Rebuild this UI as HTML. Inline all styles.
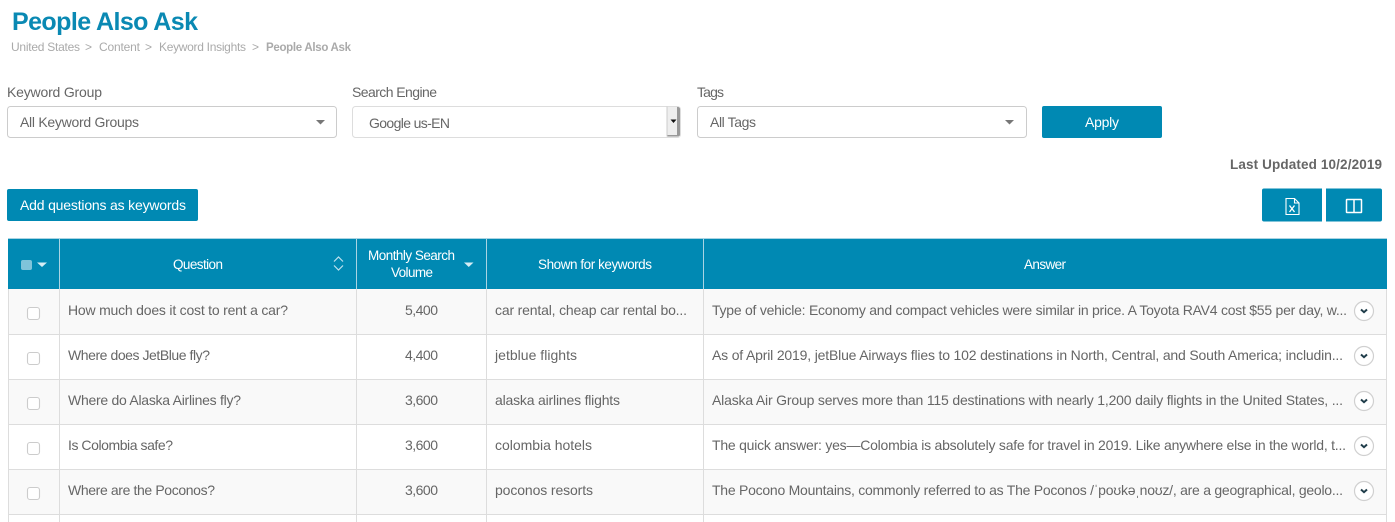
<!DOCTYPE html>
<html><head><meta charset="utf-8"><title>People Also Ask</title>
<style>
html,body{margin:0;padding:0;background:#fff;width:1395px;height:522px;overflow:hidden}
svg{display:block}
text{font-family:"Liberation Sans",sans-serif;font-size:14px;fill:#666}
.w{fill:#fff;font-size:13.500px}
.b{font-size:12px;fill:#aaa}
.l{stroke:#ddd;stroke-width:1;fill:none}
</style></head><body>
<svg width="1395" height="522" viewBox="0 0 1395 522" xmlns="http://www.w3.org/2000/svg">
<text x="12" y="30" textLength="186" lengthAdjust="spacing" style="font-size:25px;font-weight:bold;fill:#0a89b3">People Also Ask</text>
<text class="b" x="11" y="51" textLength="69">United States</text>
<text class="b" x="85" y="51" textLength="6">&gt;</text>
<text class="b" x="99" y="51" textLength="41">Content</text>
<text class="b" x="145" y="51" textLength="6">&gt;</text>
<text class="b" x="159" y="51" textLength="87">Keyword Insights</text>
<text class="b" x="252" y="51" textLength="6">&gt;</text>
<text class="b" x="266" y="51" textLength="85" style="font-weight:bold;font-size:11.500px">People Also Ask</text>

<text x="7" y="97" textLength="95">Keyword Group</text>
<text x="352" y="97" textLength="85">Search Engine</text>
<text x="697" y="97" textLength="27">Tags</text>

<rect x="7.500" y="106.500" width="329" height="31" rx="3" fill="#fff" stroke="#ccc"/>
<text x="20" y="127" textLength="119">All Keyword Groups</text>
<path d="M316 120h9l-4.500 4.500z" fill="#777"/>

<rect x="352.500" y="106.500" width="328" height="31" rx="3" fill="#fff" stroke="#ddd"/>
<text x="369" y="128" textLength="81">Google us-EN</text>
<rect x="667" y="107" width="13" height="30" fill="#eee"/>
<path d="M667 136.500h11q2 0 2-2V109q0-2-2-2h-1v28h-10z" fill="#999"/>
<path d="M667 106.500v30" stroke="#ccc"/>
<path d="M670.500 119.500h6l-3 3.500z" fill="#111"/>

<rect x="697.500" y="106.500" width="329" height="31" rx="3" fill="#fff" stroke="#ccc"/>
<text x="710" y="127" textLength="46">All Tags</text>
<path d="M1005 120h9l-4.500 4.500z" fill="#777"/>

<rect x="1042" y="106" width="120" height="32" rx="2" fill="#0089b3"/>
<text class="w" x="1085" y="127" textLength="34" style="font-size:14px">Apply</text>

<text x="1230" y="169" textLength="152" style="font-weight:bold;font-size:13.500px">Last Updated 10/2/2019</text>

<rect x="7" y="189" width="191" height="32" rx="2" fill="#0089b3"/>
<text class="w" x="20" y="210" textLength="166" style="font-size:14px">Add questions as keywords</text>

<path d="M1264 188.500h58v33h-58q-2 0-2-2v-29q0-2 2-2z" fill="#0089b3"/>
<path d="M1326 188.500h54q2 0 2 2v29q0 2-2 2h-54z" fill="#0089b3"/>
<path d="M1286 198.500h8.500l4.500 4.500v11.500h-13zM1294.500 198.500v4.500h4.500" fill="none" stroke="#fff" stroke-width="1.100"/>
<path d="M1289.500 205.500l5 6.500M1294.500 205.500l-5 6.500" stroke="#fff" stroke-width="1.300" fill="none"/>
<rect x="1346.500" y="199.500" width="15" height="13" rx="0.500" fill="none" stroke="#fff" stroke-width="1.500"/>
<path d="M1354 199.500v13" stroke="#fff" stroke-width="1.500"/>

<!-- table -->
<rect x="8" y="238" width="1379" height="51" fill="#0089b3"/>
<path d="M59.500 238v51M356.500 238v51M486.500 238v51M703.500 238v51" stroke="#a9d4e3"/>
<rect x="8" y="238" width="1379" height="1" fill="#a9d4e3"/>
<rect x="21" y="260" width="11" height="10" rx="2" fill="#7fc4da"/>
<path d="M37 262.500h10l-5 4.500z" fill="#d5edf5"/>
<text class="w" x="173" y="269" textLength="50">Question</text>
<path d="M334 261.500l4.500-4.500 4.500 4.500M334 265.500l4.500 4.500 4.500-4.500" fill="none" stroke="#bfe2ee" stroke-width="1.200"/>
<text class="w" x="368" y="260" textLength="87">Monthly Search</text>
<text class="w" x="391" y="277" textLength="42">Volume</text>
<path d="M464 262.500h9.500l-4.750 4.500z" fill="#d5edf5"/>
<text class="w" x="538" y="269" textLength="114">Shown for keywords</text>
<text class="w" x="1024" y="269" textLength="42">Answer</text>

<rect x="8" y="289" width="1379" height="45" fill="#f9f9f9"/>
<rect x="8" y="379" width="1379" height="45" fill="#f9f9f9"/>
<rect x="8" y="469" width="1379" height="45" fill="#f9f9f9"/>
<path class="l" d="M8 334.500h1379M8 379.500h1379M8 424.500h1379M8 469.500h1379M8 514.500h1379"/>
<path class="l" d="M8.500 289v233M59.500 289v233M356.500 289v233M486.500 289v233M703.500 289v233M1386.500 289v233"/>

<g fill="#fff" stroke="#ccc" stroke-width="1.100">
<rect x="27.500" y="307.500" width="12" height="12" rx="2.500"/>
<rect x="27.500" y="352.500" width="12" height="12" rx="2.500"/>
<rect x="27.500" y="397.500" width="12" height="12" rx="2.500"/>
<rect x="27.500" y="442.500" width="12" height="12" rx="2.500"/>
<rect x="27.500" y="487.500" width="12" height="12" rx="2.500"/>
</g>

<text x="68" y="315" textLength="220">How much does it cost to rent a car?</text>
<text x="405" y="315" textLength="33">5,400</text>
<text x="495" y="315" textLength="192">car rental, cheap car rental bo...</text>
<text x="712" y="315" textLength="635">Type of vehicle: Economy and compact vehicles were similar in price. A Toyota RAV4 cost $55 per day, w...</text>

<text x="68" y="360" textLength="142">Where does JetBlue fly?</text>
<text x="405" y="360" textLength="33">4,400</text>
<text x="495" y="360" textLength="82">jetblue flights</text>
<text x="712" y="360" textLength="631">As of April 2019, jetBlue Airways flies to 102 destinations in North, Central, and South America; includin...</text>

<text x="68" y="405" textLength="173">Where do Alaska Airlines fly?</text>
<text x="405" y="405" textLength="33">3,600</text>
<text x="495" y="405" textLength="125">alaska airlines flights</text>
<text x="712" y="405" textLength="631">Alaska Air Group serves more than 115 destinations with nearly 1,200 daily flights in the United States, ...</text>

<text x="68" y="450" textLength="105">Is Colombia safe?</text>
<text x="405" y="450" textLength="33">3,600</text>
<text x="495" y="450" textLength="97">colombia hotels</text>
<text x="712" y="450" textLength="634">The quick answer: yes—Colombia is absolutely safe for travel in 2019. Like anywhere else in the world, t...</text>

<text x="68" y="495" textLength="147">Where are the Poconos?</text>
<text x="405" y="495" textLength="33">3,600</text>
<text x="495" y="495" textLength="98">poconos resorts</text>
<text x="712" y="495" textLength="631" style="font-family:'Liberation Sans','DejaVu Sans',sans-serif">The Pocono Mountains, commonly referred to as The Poconos /ˈpoʊkəˌnoʊz/, are a geographical, geolo...</text>

<g fill="#fff" stroke="#d0d0d0" stroke-width="1.200">
<circle cx="1364" cy="311" r="9.500"/>
<circle cx="1364" cy="356" r="9.500"/>
<circle cx="1364" cy="401" r="9.500"/>
<circle cx="1364" cy="446" r="9.500"/>
<circle cx="1364" cy="491" r="9.500"/>
</g>
<g fill="none" stroke="#1f3d4a" stroke-width="2">
<path d="M1361 309.500l3 2.700 3-2.700"/>
<path d="M1361 354.500l3 2.700 3-2.700"/>
<path d="M1361 399.500l3 2.700 3-2.700"/>
<path d="M1361 444.500l3 2.700 3-2.700"/>
<path d="M1361 489.500l3 2.700 3-2.700"/>
</g>
</svg>
</body></html>
